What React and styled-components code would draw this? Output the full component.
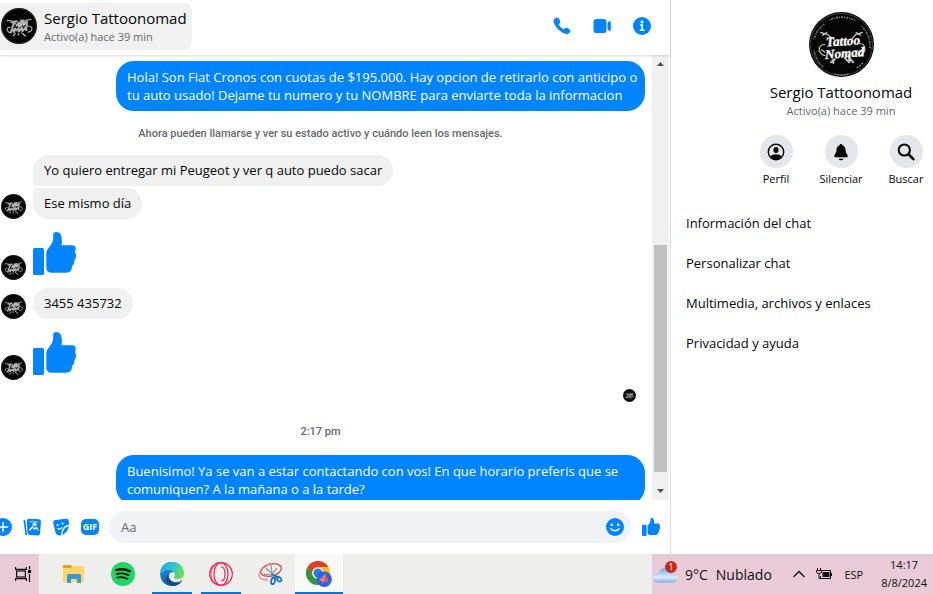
import React from 'react';
import styled, { createGlobalStyle, css } from 'styled-components';

const BLUE = '#0084ff';

const sections = [
  'Información del chat',
  'Personalizar chat',
  'Multimedia, archivos y enlaces',
  'Privacidad y ayuda',
];

const GlobalStyle = createGlobalStyle`
  * {
    box-sizing: border-box;
  }
  body {
    margin: 0;
    background: #fff;
    color: #050505;
    font-family: 'Segoe UI', 'Open Sans', sans-serif;
    font-size: 13px;
  }
  button {
    border: 0;
    padding: 0;
    background: none;
    color: inherit;
    font: inherit;
    cursor: pointer;
  }
  svg {
    display: block;
    flex-shrink: 0;
  }
`;

const Page = styled.div`
  display: flex;
  flex-direction: column;
  height: 100vh;
`;

const Main = styled.main`
  display: flex;
  flex: 1;
  min-height: 0;
`;

const Chat = styled.section`
  display: flex;
  flex-direction: column;
  flex: 1;
  min-width: 0;
`;

const ChatHeader = styled.header`
  display: flex;
  align-items: center;
  justify-content: space-between;
  height: 55px;
  padding: 0 19px 3px 0;
  box-shadow: 0 1px 2px rgba(0, 0, 0, 0.15);
  z-index: 1;
`;

const Contact = styled.button`
  display: flex;
  align-items: center;
  gap: 7px;
  height: 47px;
  padding: 0 5px 0 1px;
  border-radius: 0 8px 8px 0;
  background: #f1f1f1;
  text-align: left;
`;

const Name = styled.div`
  font-size: 15px;
  line-height: 21px;
  font-weight: 500;
  white-space: nowrap;
`;

const Status = styled.div`
  font-size: 11px;
  line-height: 15px;
  color: #65676b;
  white-space: nowrap;
`;

const HeaderActions = styled.div`
  display: flex;
  gap: 22px;
`;

const IconButton = styled.button`
  width: 18px;
  height: 18px;
  flex-shrink: 0;
  color: ${BLUE};
`;

const Scroller = styled.div`
  display: flex;
  flex: 1;
  min-height: 0;
  padding-right: 1px;
`;

const Thread = styled.div`
  flex: 1;
  min-width: 0;
  overflow: hidden;
  padding: 6px 7px 0 1px;
`;

const Row = styled.div`
  display: flex;
  align-items: flex-end;
  gap: 7px;
  margin-top: ${({ $gap }) => $gap || 0}px;
  ${({ $out }) =>
    $out &&
    css`
      justify-content: flex-end;
    `}
`;

const Bubble = styled.div`
  padding: 7px 11px;
  border-radius: 16px;
  background: #f0f0f0;
  font-size: 13px;
  line-height: 17px;
  ${({ $first }) => $first && 'border-bottom-left-radius: 4px;'}
  ${({ $last }) => $last && 'border-top-left-radius: 4px;'}
  ${({ $out }) =>
    $out &&
    css`
      width: calc(100% - 115px);
      padding-right: 6px;
      border-radius: 18px;
      background: ${BLUE};
      color: #fff;
      line-height: 18px;
    `}
`;

const AvatarSpace = styled.span`
  width: 25px;
`;

const LikeHolder = styled.div`
  padding-bottom: 5px;
`;

const Seen = styled.div`
  padding-right: 9px;
`;

const Note = styled.p`
  margin: ${({ $time }) => ($time ? '22px 0 15px' : '15px 0 13px')};
  padding-right: 5px;
  font-family: Roboto, sans-serif;
  font-size: 11px;
  line-height: 16px;
  font-weight: 500;
  text-align: center;
  color: #65676b;
`;

const Scrollbar = styled.div`
  display: flex;
  flex-direction: column;
  align-items: center;
  width: 17px;
  background: #f0f0f0;
`;

const ScrollThumb = styled.div`
  width: 13px;
  height: 51%;
  margin: auto 0 11px;
  background: #c1c1c1;
`;

const Composer = styled.form`
  display: flex;
  align-items: center;
  gap: 11px;
  height: 54px;
  padding-right: 10px;
`;

const Tools = styled.div`
  display: flex;
  gap: 11px;
  margin-left: -6px;
`;

const Field = styled.label`
  display: flex;
  align-items: center;
  flex: 1;
  height: 32px;
  margin-left: -1px;
  padding: 0 7px 0 12px;
  border-radius: 16px;
  background: #f0f2f5;
`;

const TextInput = styled.input`
  flex: 1;
  min-width: 0;
  border: 0;
  padding: 0;
  outline: 0;
  background: transparent;
  font: inherit;
  font-size: 13px;
  &::placeholder {
    color: #65676b;
    opacity: 1;
  }
`;

const Side = styled.aside`
  width: 263px;
  overflow: hidden;
  border-left: 1px solid #dcdcdc;
`;

// el panel es más ancho que la ventana, lo que sobra queda oculto
const SideInner = styled.div`
  display: flex;
  flex-direction: column;
  width: 340px;
  padding: 12px 15px 0;
`;

const Profile = styled.div`
  display: flex;
  flex-direction: column;
  align-items: center;
  text-align: center;
`;

const SideName = styled(Name)`
  margin-top: 5px;
`;

const Actions = styled.div`
  display: flex;
  margin-top: 17px;
`;

const Action = styled.button`
  display: flex;
  flex-direction: column;
  align-items: center;
  gap: 3px;
  width: 65px;
  font-size: 11px;
  line-height: 16px;
`;

const Round = styled.span`
  display: flex;
  align-items: center;
  justify-content: center;
  width: 33px;
  height: 33px;
  border-radius: 50%;
  background: #e4e6eb;
`;

const Sections = styled.nav`
  display: flex;
  flex-direction: column;
  margin-top: 16px;
`;

const Section = styled.button`
  height: 40px;
  text-align: left;
  font-size: 13px;
  font-weight: 500;
`;

const Taskbar = styled.footer`
  display: flex;
  height: 40px;
  background: #eeeeed;
`;

const TaskView = styled.button`
  display: flex;
  align-items: center;
  width: 39px;
  padding-left: 15px;
  background: #e8cbd7;
`;

const Apps = styled.div`
  display: flex;
  flex: 1;
  gap: 9px;
  padding-left: 15px;
`;

const TaskApp = styled.button`
  display: flex;
  align-items: center;
  justify-content: center;
  width: 40px;
  border-top: 2px solid transparent;
  border-bottom: 2px solid ${({ $open }) => ($open ? '#0078d7' : 'transparent')};
  ${({ $active }) =>
    $active &&
    css`
      width: 48px;
      margin-left: -4px;
      border-top-color: #f9f9f9;
      background: #f9f9f9;
    `}
`;

const Tray = styled.div`
  display: flex;
  align-items: center;
  width: 281px;
  padding: 0 6px 0 1px;
  background: #e8cbd7;
  color: #111;
`;

const Weather = styled.button`
  display: flex;
  align-items: center;
  gap: 8px;
  font-size: 14px;
  white-space: nowrap;
`;

const CloudBox = styled.span`
  position: relative;
`;

const Badge = styled.span`
  position: absolute;
  top: -4px;
  right: 0;
  width: 12px;
  height: 12px;
  border-radius: 50%;
  background: #c42b1c;
  color: #fff;
  font-size: 9px;
  line-height: 12px;
  text-align: center;
`;

const TrayIcons = styled.div`
  display: flex;
  align-items: center;
  gap: 11px;
  margin: 0 18px 0 auto;
  font-size: 11px;
`;

const Clock = styled.time`
  font-size: 11px;
  line-height: 18px;
  text-align: center;
`;

const Avatar = ({ size, detailed }) => (
  <svg width={size} height={size} viewBox="0 0 64 64" aria-hidden="true">
    <circle cx="32" cy="32" r="32" fill="#050505" />
    <circle cx="32" cy="32" r="30.500" fill="none" stroke="#666" strokeWidth="0.600" />
    {detailed ? (
      <>
        <g fill="none" stroke="#7c7c7c" strokeWidth="1.600">
          <path d="M20 8 A26 26 0 0 1 46 9" strokeDasharray="1 1 2 1" />
          <path d="M5 27 A26 26 0 0 1 15 12" strokeDasharray="1 1 2 1" />
          <path d="M52 14 A27 27 0 0 1 60 36" strokeDasharray="1 1 2 1" />
          <path d="M5 38 A27 27 0 0 0 14 54" strokeDasharray="1 1 2 1" />
          <path d="M25 61 A28 28 0 0 0 39 61" strokeDasharray="2 1" />
          <path d="M47 55 A27 27 0 0 0 53 50" strokeDasharray="2 1" />
        </g>
        <g fill="none" stroke="#c9c9c9" strokeWidth="1.200">
          <path d="M11 20 L18 22 L23 26 M53 20 L46 22 L42 27 M13 23 l5 -3 M51 23 l-5 -3" />
          <path d="M16 32 q-6 0 -6 5 q1 5 6 6 M49 31 q6 0 6 6 q-1 5 -6 6 M12 37 l4 3 M53 36 l-3 4" />
          <path d="M26 46 L21 50 M38 43 L44 50 M35 45 l5 5 M24 46 v5 M39 44 l1 6" strokeWidth="1.800" />
        </g>
        <g
          fill="#fff"
          stroke="#fff"
          strokeWidth="0.300"
          fontFamily="'Liberation Serif', serif"
          fontWeight="700"
          fontStyle="italic"
          fontSize="13"
          transform="rotate(-4 32 32)"
        >
          <text x="17" y="33">Tattoo</text>
          <text x="15" y="45">Nomad</text>
        </g>
      </>
    ) : (
      <g fill="none" stroke="#b4b4b4" strokeLinejoin="round">
        <path strokeWidth="2" d="M10 22 L20 23 L27 29 M54 20 L44 22 L38 28 M17 34 q-8 1 -6 6 q2 4 8 4 M47 32 q9 0 8 6 q-2 5 -8 5" />
        <path strokeWidth="3.500" d="M17 26 L29 23 M24 25 L20 35 M27 33 l4 -7 l1 7 l4 -11 l-1 10 l5 -10 v9 l6 -7 v8 M17 44 l3 -8 l3 7 l3 -8 M27 41 l4 -5 l1 6 l5 -7 l1 6 l7 -8 v8" />
        <path strokeWidth="2.500" d="M26 45 l-5 5 M36 44 l8 6 M31 45 v4" />
      </g>
    )}
  </svg>
);

const Like = ({ size }) => (
  <svg width={size} height={size} viewBox="0 0 43 43" fill={BLUE} aria-hidden="true">
    <rect y="16" width="11" height="27" rx="1.5" />
    <path d="M13.3 20.5 Q13.3 18.5 14.8 17 Q17 14.500 19.200 10.500 Q20.300 8.500 20.200 5.500 V2.500 Q20.200 0 23.300 0 Q26 0 27.500 2.300 Q29 5 29 9.500 Q29 12 28.200 13.300 H39 Q42.500 13.300 42.700 16.500 Q42.800 18.300 41.800 19.800 Q43.200 21.500 43 24.500 Q42.900 26.600 41.300 28.200 Q42 32 39 34.200 Q39.300 40.700 33 40.800 H19 Q13.300 40.800 13.300 36 Z" />
  </svg>
);

const PhoneIcon = () => (
  <svg width="18" height="18" viewBox="0 0 18 18" fill="currentColor">
    <path d="M.6 4.300 Q.3 2.600 1.900 1.500 L2.900 .8 Q4.700 0 5.700 1.400 L7 3.500 Q7.800 4.800 6.700 6 L5.900 6.900 Q5.600 7.300 5.900 7.900 Q7.400 10.500 10.100 12 Q10.700 12.300 11.100 12 L12 11.200 Q13.200 10.300 14.500 11.100 L16.600 12.400 Q17.900 13.400 17.200 14.700 L16.500 15.700 Q15.400 17.300 13.500 17 Q9.500 16.500 5.300 12.500 Q1.100 8.300 .6 4.300 Z" />
  </svg>
);

const VideoIcon = () => (
  <svg width="18" height="18" viewBox="0 0 18 18" fill="currentColor">
    <rect x="0.500" y="2" width="13" height="14" rx="2.800" />
    <path d="M14.500 7 Q14.500 5.500 15.500 4.800 L16.300 4.200 Q17.800 3.600 17.800 5.200 V12.800 Q17.800 14.400 16.300 13.800 L15.500 13.200 Q14.500 12.500 14.500 11 Z" />
  </svg>
);

const InfoIcon = () => (
  <svg width="18" height="18" viewBox="0 0 18 18">
    <circle cx="9" cy="9" r="9" fill="currentColor" />
    <circle cx="9" cy="4.900" r="1.500" fill="#fff" />
    <path d="M7.700 8 H9.200 V13.200 M7.500 13.200 H10.700" fill="none" stroke="#fff" strokeWidth="1.700" strokeLinecap="round" />
  </svg>
);

const PlusIcon = () => (
  <svg width="18" height="18" viewBox="0 0 18 18">
    <circle cx="9" cy="9" r="9" fill="currentColor" />
    <path d="M9 4.500 V13.500 M4.500 9 H13.500" stroke="#fff" strokeWidth="1.500" strokeLinecap="round" />
  </svg>
);

const PhotoIcon = () => (
  <svg width="18" height="18" viewBox="0 0 18 18">
    <path d="M1.400 2.500 L3.200 16.500" stroke="currentColor" strokeWidth="1.700" strokeLinecap="round" />
    <path d="M6 .8 L16 1.200 Q18 1.400 17.900 3.400 L17 15.800 Q16.800 17.800 14.800 17.600 L6.500 17 Q4.700 16.800 4.500 14.800 L3.800 3 Q3.800 .8 6 .8 Z" fill="currentColor" />
    <path d="M6.500 12.500 L9.300 9 L11.500 11 L13.300 9.500 L15.300 12.500" fill="none" stroke="#fff" strokeWidth="1.300" strokeLinejoin="round" />
    <path d="M6.300 3.500 L15.600 4" stroke="#fff" strokeWidth="0.600" />
    <circle cx="11.500" cy="6.300" r="2" fill="#fff" />
  </svg>
);

const StickerIcon = () => (
  <svg width="18" height="18" viewBox="0 0 18 18">
    <path d="M3.500 2 L14 .8 Q16.600 .7 16.800 3 L16.900 6.800 Q12 7.500 10.500 11 Q9.500 13.500 9 17.500 L6 17.300 Q4 16.800 3.500 14.500 L1.200 5 Q.8 2.400 3.500 2 Z" fill="currentColor" />
    <path d="M16.900 8 Q16.800 12.500 10.400 17.200 Q10.600 9.500 16.900 8 Z" fill="currentColor" />
    <circle cx="5.700" cy="7" r="1.100" fill="#fff" />
    <circle cx="10.500" cy="5.500" r="1.100" fill="#fff" />
    <path d="M5.800 10.500 Q8 12 9.800 9.500" fill="none" stroke="#fff" strokeWidth="1.200" strokeLinecap="round" />
  </svg>
);

const GifIcon = () => (
  <svg width="18" height="18" viewBox="0 0 18 18">
    <rect x="0" y="1" width="18" height="16" rx="5" fill="currentColor" />
    <text x="9" y="12" fill="#fff" fontFamily="'Open Sans', sans-serif" fontSize="9" fontWeight="700" textAnchor="middle">GIF</text>
  </svg>
);

const SmileIcon = () => (
  <svg width="18" height="18" viewBox="0 0 18 18">
    <circle cx="9" cy="9" r="9" fill="currentColor" />
    <circle cx="5.800" cy="6.800" r="1.200" fill="#fff" />
    <circle cx="12.200" cy="6.800" r="1.200" fill="#fff" />
    <path d="M4.800 10.800 Q9 14.800 13.200 10.800" fill="none" stroke="#fff" strokeWidth="1.300" strokeLinecap="round" />
  </svg>
);

const PersonIcon = () => (
  <svg width="18" height="18" viewBox="0 0 18 18">
    <circle cx="9" cy="9" r="7.700" fill="none" stroke="#050505" strokeWidth="1.400" />
    <ellipse cx="9" cy="7" rx="2.600" ry="3" fill="#050505" />
    <path d="M3.200 13.200 Q5.500 11.300 9 11.300 Q12.500 11.300 14.800 13.200 Q12.500 16.500 9 16.500 Q5.500 16.500 3.200 13.200 Z" fill="#050505" />
  </svg>
);

const BellIcon = () => (
  <svg width="18" height="18" viewBox="0 0 18 18" fill="#050505">
    <path d="M9 1 Q10.300 1 10.500 2.200 Q13.500 3.300 13.500 7 Q13.500 9.500 15 11.300 Q16.300 13 15.500 14.200 H2.500 Q1.700 13 3 11.300 Q4.500 9.500 4.500 7 Q4.500 3.300 7.500 2.200 Q7.700 1 9 1 Z" />
    <path d="M6.500 15.800 H11.500 Q10.800 17.300 9 17.300 Q7.200 17.300 6.500 15.800 Z" />
  </svg>
);

const SearchIcon = () => (
  <svg width="18" height="18" viewBox="0 0 18 18" fill="none" stroke="#050505" strokeLinecap="round">
    <circle cx="7.300" cy="7" r="5.600" strokeWidth="2" />
    <path d="M11.700 11.500 L16.300 16.200" strokeWidth="2.600" />
  </svg>
);

const TaskViewIcon = () => (
  <svg width="17" height="16" viewBox="0 0 17 16" fill="none" stroke="#111" strokeWidth="1.200">
    <path d="M.6 1 V3.400 H11.400 V1 M.6 15 V12.600 H11.400 V15" />
    <rect x="1.600" y="5" width="8.800" height="6" />
    <path d="M14.500 0 V3 M14.500 8 V16" />
    <rect x="13.500" y="4.500" width="2" height="2" fill="#111" />
  </svg>
);

const FolderIcon = () => (
  <svg width="24" height="24" viewBox="0 0 24 24">
    <path d="M1 3 H9 L11 5 H22 V20 H1 Z" fill="#e0a21b" />
    <path d="M1 6 H9 L11 4 H22 V20 H1 Z" fill="#ffd768" />
    <path d="M5 21 V13.500 Q5 12 6.500 12 H17.500 Q19 12 19 13.500 V21 H15 V17 H9 V21 Z" fill="#3a96dd" />
  </svg>
);

const SpotifyIcon = () => (
  <svg width="24" height="24" viewBox="0 0 24 24" fill="none" stroke="#06150b" strokeLinecap="round">
    <circle cx="12" cy="12" r="12" fill="#1ed760" stroke="none" />
    <path strokeWidth="2.300" d="M5.200 8 Q12.500 6 19 9.300" />
    <path strokeWidth="1.900" d="M5.800 12 Q12 10.300 17.600 13.100" />
    <path strokeWidth="1.600" d="M6.300 15.600 Q12 14.300 16.500 16.800" />
  </svg>
);

const EdgeIcon = () => (
  <svg width="24" height="24" viewBox="0 0 24 24">
    <defs>
      <linearGradient id="edgeTop" x1="0" y1="0.200" x2="1" y2="0.500">
        <stop offset="0" stopColor="#2aa5e6" />
        <stop offset="0.500" stopColor="#2cc3d2" />
        <stop offset="1" stopColor="#6be04a" />
      </linearGradient>
      <linearGradient id="edgeLow" x1="0" y1="0" x2="0.500" y2="1">
        <stop offset="0" stopColor="#1b8fdc" />
        <stop offset="1" stopColor="#0c59a4" />
      </linearGradient>
    </defs>
    <path d="M0 11.500 A12 12 0 0 1 24 11.500 Q24 16.500 18.300 17 Q14.500 17 13.800 15.500 Q15.500 13.500 14.500 11 Q12.500 7.500 8 7.500 Q3 7.500 0 11.500 Z" fill="url(#edgeTop)" />
    <path d="M0 12 Q2.500 7.500 8 7.500 Q12 7.500 14 10.200 Q9.500 9.800 8.600 13.500 Q8.400 18.500 13.500 20.300 Q18.500 21.500 22.500 18 Q18.500 24 12 24 Q1 23.500 0 12 Z" fill="url(#edgeLow)" />
    <path d="M9 12 Q8 14 9 16 Q11.500 20.500 17 20.500 Q20 20.500 22.500 18 Q19 24 12.500 24 Q6 22.500 5.900 16.500 Q6.300 13 9 12 Z" fill="#124a8c" />
  </svg>
);

const OperaIcon = () => (
  <svg width="24" height="24" viewBox="0 0 24 24" fill="none" stroke="#fa1e4e" strokeWidth="1.200">
    <circle cx="12" cy="12" r="11.300" />
    <ellipse cx="12" cy="12" rx="7" ry="11.300" />
    <path d="M12 5 Q16 5 16 12 Q16 19 12 19" />
    <path d="M10 1 A10.500 11.300 0 0 0 10 23" strokeWidth="0.800" />
  </svg>
);

const SnipIcon = () => (
  <svg width="26" height="24" viewBox="0 0 26 24" fill="none">
    <ellipse cx="14" cy="8" rx="10.500" ry="6" stroke="#e14545" strokeWidth="1.300" transform="rotate(-14 14 8)" />
    <path d="M10 4 Q2 8 2 13 Q2 18 11 18" stroke="#e98a8a" strokeWidth="1.300" />
    <path d="M14 3 L15.500 14 M7 12 L17 13.500 M20 6 L14 14 M9 6 L18 15" stroke="#838990" strokeWidth="1.100" />
    <path d="M16 13 L22 16" stroke="#1677bd" strokeWidth="2" />
    <ellipse cx="16" cy="19" rx="1.800" ry="3.300" stroke="#1677bd" strokeWidth="1.800" transform="rotate(12 16 19)" />
    <ellipse cx="21.800" cy="17" rx="1.800" ry="3" stroke="#1677bd" strokeWidth="1.800" transform="rotate(-45 21.800 17)" />
  </svg>
);

const ChromeIcon = () => (
  <svg width="26" height="26" viewBox="0 0 26 26">
    <circle cx="12" cy="12" r="12" fill="#fbc116" />
    <path d="M1.600 6 A12 12 0 0 1 22.400 6 H12 A6 6 0 0 0 6.800 15 Z" fill="#de3c2c" />
    <path d="M1.600 6 L6.800 15 A6 6 0 0 0 14 17.600 L12 24 A12 12 0 0 1 1.600 6 Z" fill="#279847" />
    <circle cx="12" cy="12" r="5.600" fill="#fff" />
    <circle cx="12" cy="12" r="4.500" fill="#2d79e6" />
    <circle cx="18.200" cy="18.200" r="7.700" fill="#2b62e3" />
    <path d="M19.500 12.500 L22.500 21.500 L18.500 20 L16 22.500 L16 20 L13 19.500 Z" fill="#f47c74" />
    <path d="M19.500 12.500 L18.500 20 L22.500 21.500 Z" fill="#d94f68" />
  </svg>
);

const CloudIcon = () => (
  <svg width="24" height="18" viewBox="0 0 24 18">
    <defs>
      <linearGradient id="cloud" x1="0" y1="0" x2="0" y2="1">
        <stop offset="0" stopColor="#73a5ef" />
        <stop offset="0.650" stopColor="#dcecff" />
        <stop offset="1" stopColor="#79abf2" />
      </linearGradient>
    </defs>
    <path d="M5 17.500 Q0 17.300 0 12.800 Q.4 8.300 5.200 8.500 Q7 3 12.500 3 Q18 3.300 19 8.500 Q24 8.700 24 13 Q23.800 17.300 19.500 17.500 Z" fill="url(#cloud)" />
  </svg>
);

const ChevronIcon = () => (
  <svg width="12" height="8" viewBox="0 0 12 8" fill="none" stroke="#111" strokeWidth="1.300">
    <path d="M.5 7 L6 1.500 L11.500 7" />
  </svg>
);

const BatteryIcon = () => (
  <svg width="17" height="12" viewBox="0 0 17 12" fill="none" stroke="#111">
    <path d="M6 2.500 H14.500 V10.500 H4.500 V8" />
    <path d="M15.500 5 V8" />
    <rect x="7" y="4.500" width="6" height="4" fill="#111" />
    <path d="M1.500 0 V2 M4.500 0 V2 M.5 2.500 H5.500 V4 Q5.500 5.500 3 5.500 Q.5 5.500 .5 4 Z M3 6 V10.500 H5" />
  </svg>
);

const Arrow = ({ down }) => (
  <svg width="17" height="17" viewBox="0 0 17 17" fill="#505050">
    <path d={down ? 'M5 6 H12 L8.500 10 Z' : 'M5 11 H12 L8.500 7 Z'} />
  </svg>
);

const Incoming = ({ text, gap, first, last }) => (
  <Row $gap={gap}>
    {first ? <AvatarSpace /> : <Avatar size={25} />}
    <Bubble $first={first} $last={last}>{text}</Bubble>
  </Row>
);

const IncomingLike = () => (
  <Row $gap={13}>
    <Avatar size={25} />
    <LikeHolder>
      <Like size={43} />
    </LikeHolder>
  </Row>
);

const App = () => {
  return (
    <Page>
      <GlobalStyle />
      <Main>
        <Chat>
          <ChatHeader>
            <Contact>
              <Avatar size={36} />
              <div>
                <Name>Sergio Tattoonomad</Name>
                <Status>Activo(a) hace 39 min</Status>
              </div>
            </Contact>
            <HeaderActions>
              <IconButton aria-label="Llamar"><PhoneIcon /></IconButton>
              <IconButton aria-label="Videollamada"><VideoIcon /></IconButton>
              <IconButton aria-label="Información"><InfoIcon /></IconButton>
            </HeaderActions>
          </ChatHeader>
          <Scroller>
            <Thread>
              <Row $out>
                <Bubble $out>
                  Hola! Son Fiat Cronos con cuotas de $195.000. Hay opcion de retirarlo con anticipo o tu auto
                  usado! Dejame tu numero y tu NOMBRE para enviarte toda la informacion
                </Bubble>
              </Row>
              <Note>Ahora pueden llamarse y ver su estado activo y cuándo leen los mensajes.</Note>
              <Incoming first text="Yo quiero entregar mi Peugeot y ver q auto puedo sacar" />
              <Incoming last gap={2} text="Ese mismo día" />
              <IncomingLike />
              <Incoming gap={8} text="3455 435732" />
              <IncomingLike />
              <Row $out $gap={9}>
                <Seen>
                  <Avatar size={13} />
                </Seen>
              </Row>
              <Note $time>2:17 pm</Note>
              <Row $out>
                <Bubble $out>
                  Buenisimo! Ya se van a estar contactando con vos! En que horario preferis que se comuniquen? A la
                  mañana o a la tarde?
                </Bubble>
              </Row>
            </Thread>
            <Scrollbar>
              <Arrow />
              <ScrollThumb />
              <Arrow down />
            </Scrollbar>
          </Scroller>
          <Composer onSubmit={(e) => e.preventDefault()}>
            <Tools>
              <IconButton type="button" aria-label="Más acciones"><PlusIcon /></IconButton>
              <IconButton type="button" aria-label="Adjuntar foto"><PhotoIcon /></IconButton>
              <IconButton type="button" aria-label="Sticker"><StickerIcon /></IconButton>
              <IconButton type="button" aria-label="Elegir GIF"><GifIcon /></IconButton>
            </Tools>
            <Field>
              <TextInput placeholder="Aa" aria-label="Mensaje" />
              <IconButton type="button" aria-label="Emoji"><SmileIcon /></IconButton>
            </Field>
            <IconButton type="button" aria-label="Me gusta"><Like size={18} /></IconButton>
          </Composer>
        </Chat>
        <Side>
          <SideInner>
            <Profile>
              <Avatar size={65} detailed />
              <SideName>Sergio Tattoonomad</SideName>
              <Status>Activo(a) hace 39 min</Status>
              <Actions>
                <Action><Round><PersonIcon /></Round>Perfil</Action>
                <Action><Round><BellIcon /></Round>Silenciar</Action>
                <Action><Round><SearchIcon /></Round>Buscar</Action>
              </Actions>
            </Profile>
            <Sections>
              {sections.map((s) => (
                <Section key={s}>{s}</Section>
              ))}
            </Sections>
          </SideInner>
        </Side>
      </Main>
      <Taskbar>
        <TaskView aria-label="Vista de tareas"><TaskViewIcon /></TaskView>
        <Apps>
          <TaskApp aria-label="Explorador"><FolderIcon /></TaskApp>
          <TaskApp aria-label="Spotify"><SpotifyIcon /></TaskApp>
          <TaskApp $open aria-label="Edge"><EdgeIcon /></TaskApp>
          <TaskApp $open aria-label="Opera"><OperaIcon /></TaskApp>
          <TaskApp aria-label="Recortes"><SnipIcon /></TaskApp>
          <TaskApp $open $active aria-label="Chrome"><ChromeIcon /></TaskApp>
        </Apps>
        <Tray>
          <Weather>
            <CloudBox>
              <CloudIcon />
              <Badge>1</Badge>
            </CloudBox>
            <span>9°C</span>
            <span>Nublado</span>
          </Weather>
          <TrayIcons>
            <ChevronIcon />
            <BatteryIcon />
            <span>ESP</span>
          </TrayIcons>
          <Clock>
            14:17
            <br />
            8/8/2024
          </Clock>
        </Tray>
      </Taskbar>
    </Page>
  );
};

export default App;
